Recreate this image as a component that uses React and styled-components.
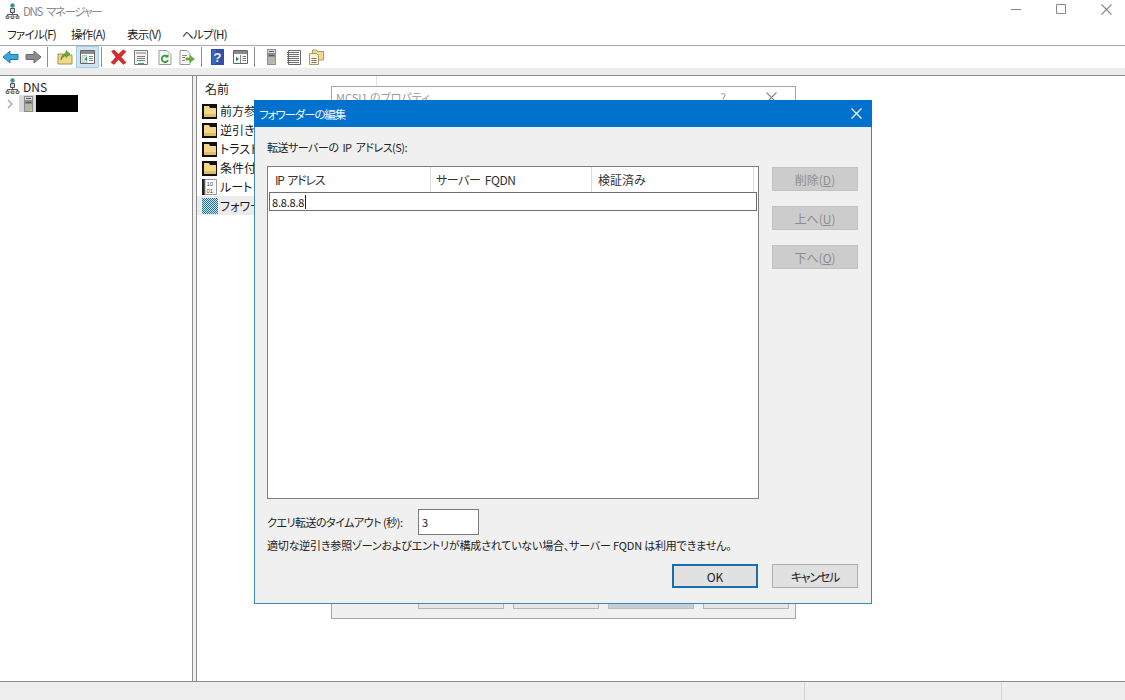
import React from "react";
import styled, { createGlobalStyle } from "styled-components";

const Global = createGlobalStyle`
  html, body { margin: 0; padding: 0; background: #fff; }
  body {
    font-family: "Noto Sans CJK JP", "Noto Sans", sans-serif;
    font-size: 12px;
    color: #1a1a1a;
    font-feature-settings: "palt";
  }
`;

const Win = styled.div`
  position: relative;
  width: 1125px;
  height: 700px;
  display: flex;
  flex-direction: column;
  overflow: hidden;
  background: #fff;
`;

const TitleBar = styled.div`
  height: 22px;
  display: flex;
  align-items: center;
  padding-left: 5px;
  gap: 3px;
  color: #8a8a8a;
  font-size: 11.5px;
  svg { flex: none; }
`;

const TitleText = styled.span`
  flex: 1;
  letter-spacing: -1.4px;
  word-spacing: 3px;
`;

const WinButtons = styled.div`
  display: flex;
  align-items: center;
  gap: 35px;
  padding: 0 13px 4px 0;
  color: #8a8a8a;
`;

const MenuBar = styled.div`
  height: 23px;
  display: flex;
  align-items: center;
  gap: 17px;
  padding-left: 7px;
  border-bottom: 1px solid #a8a8a8;
  font-size: 11.5px;
  letter-spacing: -0.7px;
  color: #222;
`;

const MenuItem = styled.span`
  width: ${p => p.$w}px;
  white-space: nowrap;
`;

const Toolbar = styled.div`
  height: 22px;
  display: flex;
  align-items: center;
  padding-left: 2px;
`;

const Tool = styled.div`
  width: ${p => p.$w}px;
  height: 22px;
  margin-left: ${p => p.$ml || 0}px;
  display: flex;
  align-items: center;
  justify-content: center;
  flex: none;
  ${p => p.$active && "background: #cfe3f3; border: 1px solid #a8cce8; box-sizing: border-box;"}
`;

const Sep = styled.div`
  width: 1px;
  height: 20px;
  margin-left: ${p => p.$ml}px;
  background: #8f8f8f;
  flex: none;
`;

const Band = styled.div`
  height: 7px;
  background: #ececec;
  border-bottom: 1px solid #8c8c8c;
`;

const Panes = styled.div`
  flex: 1;
  display: flex;
  gap: 3px;
  min-height: 0;
  background: #f0f0f0;
`;

const TreePane = styled.div`
  width: 192px;
  background: #fff;
  border-right: 1px solid #8c8c8c;
  padding-top: 1px;
`;

const TreeRow = styled.div`
  height: ${p => p.$h}px;
  display: flex;
  align-items: center;
  padding-left: ${p => p.$indent || 0}px;
  gap: ${p => p.$gap || 0}px;
`;

const Chevron = styled.div`
  width: 19px;
  display: flex;
  padding-left: 7px;
  box-sizing: border-box;
  flex: none;
`;

const TreeSelected = styled.div`
  width: 59px;
  height: 17px;
  background: #d9d9d9;
  display: flex;
  align-items: center;
  padding-left: 5px;
  box-sizing: border-box;
  gap: 3px;
`;

const Redacted = styled.div`
  width: 42px;
  height: 17px;
  background: #000;
  margin-left: auto;
`;

const ListPane = styled.div`
  flex: 1;
  background: #fff;
  border-left: 1px solid #8c8c8c;
`;

const ListHead = styled.div`
  width: 180px;
  height: 25px;
  padding-left: 8px;
  display: flex;
  align-items: center;
  box-sizing: border-box;
  border-right: 1px solid #e2e2e2;
`;

const ListRow = styled.div`
  width: 180px;
  height: 19px;
  display: flex;
  align-items: center;
  gap: 2px;
  padding-left: 5px;
  box-sizing: border-box;
  background: ${p => (p.$selected ? "#ececec" : "transparent")};
  white-space: nowrap;
`;

const StatusBar = styled.div`
  height: 18px;
  background: #eeeeee;
  border-top: 1px solid #8c8c8c;
  display: flex;
  justify-content: flex-end;
`;

const StatusCell = styled.div`
  width: ${p => p.$w}px;
  box-sizing: border-box;
  border-left: 1px solid #d2d2d2;
`;

const BackDialog = styled.div`
  position: absolute;
  left: 331px;
  top: 86px;
  width: 463px;
  height: 531px;
  background: #f0f0f0;
  border: 1px solid #a6a6a6;
`;

const BackTitle = styled.div`
  height: 20px;
  background: #fff;
  display: flex;
  align-items: center;
  padding: 0 18px 0 4px;
  justify-content: space-between;
  color: #9a9a9a;
  font-size: 11px;
`;

const BackControls = styled.div`
  display: flex;
  align-items: center;
  gap: 40px;
`;

const BackButtons = styled.div`
  position: absolute;
  left: 86px;
  bottom: 9px;
  display: flex;
  gap: 9px;
`;

const BackButton = styled.div`
  width: 86px;
  height: 24px;
  background: ${p => (p.$tint ? "#c3ced6" : "#e6e6e6")};
  border: 1px solid ${p => (p.$tint ? "#b5c0c8" : "#b4b4b4")};
  box-sizing: border-box;
`;

const Dialog = styled.div`
  position: absolute;
  left: 254px;
  top: 100px;
  width: 618px;
  height: 504px;
  box-sizing: border-box;
  background: #f0f0f0;
  border: 1px solid #3f88b8;
  border-top: none;
  display: flex;
  flex-direction: column;
`;

const DialogTitle = styled.div`
  height: 27px;
  margin: 0 -1px;
  flex: none;
  background: #0072cd;
  color: #f2f8fd;
  display: flex;
  align-items: center;
  justify-content: space-between;
  padding: 0 10px 0 5px;
  font-size: 11.5px;
  span { letter-spacing: -1.1px; }
`;

const DialogBody = styled.div`
  flex: 1;
  padding: 11px 13px 14px 12px;
  display: flex;
  flex-direction: column;
`;

const FieldLabel = styled.div`
  height: 18px;
  line-height: 18px;
  font-size: 11px;
  letter-spacing: -0.5px;
  word-spacing: 2px;
  color: #222;
`;

const TableRow = styled.div`
  display: flex;
  gap: 13px;
  margin-top: 10px;
`;

const Table = styled.div`
  position: relative;
  width: 492px;
  height: 333px;
  box-sizing: border-box;
  background: #fff;
  border: 1px solid #7f7f7f;
`;

const TableHead = styled.div`
  height: 25px;
  display: flex;
`;

const HeadCell = styled.div`
  width: ${p => p.$w}px;
  padding-left: ${p => p.$pad}px;
  box-sizing: border-box;
  display: flex;
  align-items: center;
  border-right: 1px solid #dcdcdc;
  letter-spacing: ${p => p.$ls || 0}px;
  word-spacing: 2px;
  white-space: pre;
  color: #333;
`;

const EditRow = styled.div`
  margin: 0 0 0 1px;
  width: 488px;
  height: 19px;
  box-sizing: border-box;
  border: 1px solid #6e6e6e;
  display: flex;
  align-items: center;
  padding-left: 2px;
  font-size: 11px;
  letter-spacing: -0.2px;
`;

const Caret = styled.span`
  width: 1px;
  height: 14px;
  background: #222;
  margin-left: 1px;
`;

const SideButtons = styled.div`
  display: flex;
  flex-direction: column;
  gap: 15px;
  padding-top: 1px;
`;

const DisabledButton = styled.div`
  width: 86px;
  height: 24px;
  background: #cccccc;
  border: 1px solid #c2c2c2;
  box-sizing: border-box;
  color: #8c8c8c;
  display: flex;
  align-items: center;
  justify-content: center;
  u { text-underline-offset: 1px; }
`;

const TimeoutRow = styled.div`
  display: flex;
  align-items: center;
  margin-top: 10px;
  height: 26px;
  color: #222;
`;

const TimeoutLabel = styled.span`
  width: 151px;
  white-space: nowrap;
  font-size: 11px;
  letter-spacing: -0.5px;
`;

const TimeoutInput = styled.div`
  width: 61px;
  height: 26px;
  box-sizing: border-box;
  background: #fff;
  border: 1px solid #7a7a7a;
  padding-left: 3px;
  display: flex;
  align-items: center;
  font-size: 11px;
`;

const Note = styled.div`
  margin-top: 1px;
  height: 18px;
  line-height: 18px;
  font-size: 11px;
  letter-spacing: -0.18px;
  color: #222;
  white-space: nowrap;
`;

const Footer = styled.div`
  margin-top: auto;
  margin-bottom: 1px;
  display: flex;
  justify-content: flex-end;
  gap: 14px;
`;

const Button = styled.div`
  width: 86px;
  height: 24px;
  box-sizing: border-box;
  background: #e1e1e1;
  border: ${p => (p.$primary ? "2px solid #1b6ea8" : "1px solid #adadad")};
  display: flex;
  align-items: center;
  justify-content: center;
  letter-spacing: ${p => (p.$primary ? 0 : -1.2)}px;
  color: #222;
`;

const DnsIcon = () => (
  <svg width="15" height="16" viewBox="0 0 15 16">
    <circle cx="7.5" cy="2.5" r="2.2" fill="#3f8f96" />
    <path d="M5.5 5.500h4v4h-4z" fill="#d8d8d8" stroke="#555" />
    <path d="M7.500 9.500v2M2.500 13v-1.500h10V13" fill="none" stroke="#555" />
    <path d="M1 13h3v2.500H1zM6 13h3v2.500H6zM11 13h3v2.500h-3z" fill="#c9c9c9" stroke="#555" strokeWidth=".8" />
  </svg>
);

const ServerIcon = () => (
  <svg width="9" height="16" viewBox="0 0 9 16">
    <path d="M0 0h9v16H0z" fill="#8d8d8d" />
    <path d="M1 1h7v3H1z" fill="#dcdcdc" />
    <path d="M2 2.500h5M2 6.500h5" stroke="#555" />
    <path d="M1 8h7v7H1z" fill="#b5b5b5" />
    <path d="M6 13h2v2H6z" fill="#c8d36a" />
  </svg>
);

const Folder = () => (
  <svg width="16" height="16" viewBox="0 0 16 16">
    <path d="M0 1h15v15H0z" fill="#111" />
    <path d="M2 3h5l1 2h6v9H2z" fill="#f2d68c" />
    <path d="M2 11h12v3H2z" fill="#e2bd66" />
  </svg>
);

const RootHints = () => (
  <svg width="16" height="16" viewBox="0 0 16 16">
    <path d="M0 0h3v16H0z" fill="#222" />
    <path d="M3 .5h11.500v15H3z" fill="#fff" stroke="#999" />
    <text x="4.500" y="7" fontSize="6" fontFamily="Liberation Sans" fill="#444">10</text>
    <text x="4.500" y="13.500" fontSize="6" fontFamily="Liberation Sans" fill="#444">01</text>
  </svg>
);

const Hatched = () => (
  <svg width="16" height="16" viewBox="0 0 16 16">
    <defs>
      <pattern id="dots" width="2" height="2" patternUnits="userSpaceOnUse">
        <path d="M0 0h2v2H0z" fill="#cfe6ee" />
        <path d="M0 0h1v1H0zM1 1h1v1H1z" fill="#1f6f93" />
      </pattern>
    </defs>
    <path d="M0 0h16v16H0z" fill="url(#dots)" />
  </svg>
);

const ArrowLeft = ({ fill, stroke }) => (
  <svg width="17" height="14" viewBox="0 0 17 14">
    <path d="M1 7l7-6v3.500h8v5H8V13z" fill={fill} stroke={stroke} />
  </svg>
);

const ArrowRight = ({ fill, stroke }) => (
  <svg width="17" height="14" viewBox="0 0 17 14">
    <path d="M16 7L9 1v3.500H1v5h8V13z" fill={fill} stroke={stroke} />
  </svg>
);

const FolderUp = () => (
  <svg width="16" height="16" viewBox="0 0 16 16">
    <path d="M1 5h5l1 1h8v9H1z" fill="#f0d98f" stroke="#a88d45" />
    <path d="M4 11c0-4 2-6 5-7V1.500L13 5l-4 3.500V6.500C7 7 5.500 8.500 4 11z" fill="#6fae2e" stroke="#4c7f1c" strokeWidth=".6" />
  </svg>
);

const PaneIcon = () => (
  <svg width="15" height="14" viewBox="0 0 15 14">
    <path d="M.5.5h14v13H.5z" fill="#fff" stroke="#666" />
    <path d="M1 1h13v3H1z" fill="#8a8a8a" />
    <path d="M2 5.500h5v7H2z" fill="#d8e6e6" stroke="#8aa" strokeWidth=".5" />
    <path d="M7 7l-2.500 2L7 11z" fill="#2f8a5a" />
    <path d="M9 6.500h4M9 8.500h4M9 10.500h4" stroke="#888" />
  </svg>
);

const DeleteIcon = () => (
  <svg width="17" height="16" viewBox="0 0 17 16">
    <path d="M1.500 2.500L4 .8l4.500 4.400L13 .8l3 1.700L11 8l5 5.500-2.500 2-5-5-4.500 5-3-2L6 8z" fill="#d92b2b" stroke="#a81c1c" strokeWidth=".5" />
  </svg>
);

const PropsIcon = () => (
  <svg width="14" height="15" viewBox="0 0 14 15">
    <path d="M.5.5h13v14H.5z" fill="#f4f4f4" stroke="#777" />
    <path d="M2 2h10v2H2z" fill="#b8b8b8" />
    <path d="M3 6.500h8M3 8.500h8M3 10.500h8" stroke="#7f7f7f" />
    <path d="M4 13.500h6" stroke="#3f9aa8" />
  </svg>
);

const RefreshIcon = () => (
  <svg width="14" height="15" viewBox="0 0 14 15">
    <path d="M1 .5h8l4 4v10H1z" fill="#f7f7f7" stroke="#999" />
    <path d="M10 10a3.200 3.200 0 1 1-.8-3.400" fill="none" stroke="#2e9b35" strokeWidth="1.800" />
    <path d="M10.500 4v3.500H7z" fill="#2e9b35" />
  </svg>
);

const ExportIcon = () => (
  <svg width="16" height="15" viewBox="0 0 16 15">
    <path d="M1 .5h7l3 3v11H1z" fill="#fafafa" stroke="#999" />
    <path d="M3 5.500h5M3 7.500h3M3 10.500h3" stroke="#888" />
    <path d="M7 8h4V5.500L15.500 9 11 12.500V10H7z" fill="#69b53a" stroke="#4a8a25" strokeWidth=".5" />
  </svg>
);

const HelpIcon = () => (
  <svg width="13" height="16" viewBox="0 0 13 16">
    <path d="M0 0h13v16H0z" fill="#2f4fa8" />
    <path d="M1 1h4v14H1z" fill="#3d63c4" />
    <text x="6.500" y="13" textAnchor="middle" fontSize="13" fontWeight="700" fontFamily="Liberation Sans" fill="#f2f2f2">?</text>
  </svg>
);

const ActionPaneIcon = () => (
  <svg width="15" height="14" viewBox="0 0 15 14">
    <path d="M.5.5h14v13H.5z" fill="#fff" stroke="#666" />
    <path d="M1 1h13v3H1z" fill="#8a8a8a" />
    <path d="M3 6.500l3 2.500-3 2.500z" fill="#2f8a5a" />
    <path d="M7.500 5v8" stroke="#888" />
    <path d="M9.500 6.500h3.500M9.500 8.500h3.500M9.500 10.500h3.500" stroke="#777" />
  </svg>
);

const ListIcon = () => (
  <svg width="14" height="15" viewBox="0 0 14 15">
    <path d="M1.500.5h12v14h-12z" fill="#f6f6f6" stroke="#666" />
    <path d="M0 2.500h12M0 4.500h12M0 6.500h12M0 8.500h12M0 10.500h12M0 12.500h12" stroke="#6f6f6f" />
  </svg>
);

const FolderDoc = () => (
  <svg width="15" height="16" viewBox="0 0 15 16">
    <path d="M3.500 1h4l1 1.500h6V11h-11z" fill="#f1d98f" stroke="#b59a55" />
    <path d="M.5 4.500h7l2 2V15.500h-9z" fill="#fbf3d8" stroke="#a89a70" />
    <path d="M2.500 9.500h5M2.500 11.500h5M2.500 13.500h5" stroke="#777" />
  </svg>
);

const CloseGlyph = ({ size = 11, color = "#fff" }) => (
  <svg width={size} height={size} viewBox="0 0 11 11">
    <path d="M.5.500l10 10M10.500.500l-10 10" stroke={color} strokeWidth="1.100" fill="none" />
  </svg>
);

const rows = [
  [<Folder key="a" />, "前方参照ゾーン"],
  [<Folder key="b" />, "逆引き参照ゾーン"],
  [<Folder key="c" />, "トラストポイント"],
  [<Folder key="d" />, "条件付きフォワーダー"],
  [<RootHints key="e" />, "ルートヒント"],
  [<Hatched key="f" />, "フォワーダー"],
];

export default function App() {
  return (
    <Win>
      <Global />
      <TitleBar>
        <DnsIcon />
        <TitleText>DNS マネージャー</TitleText>
        <WinButtons>
          <svg width="10" height="1"><path d="M0 .5h10" stroke="#8a8a8a" /></svg>
          <svg width="10" height="10"><path d="M.5.500h9v9h-9z" fill="none" stroke="#8a8a8a" /></svg>
          <CloseGlyph color="#8a8a8a" />
        </WinButtons>
      </TitleBar>
      <MenuBar>
        <MenuItem $w={47}>ファイル(F)</MenuItem>
        <MenuItem $w={39}>操作(A)</MenuItem>
        <MenuItem $w={38}>表示(V)</MenuItem>
        <MenuItem $w={45}>ヘルプ(H)</MenuItem>
      </MenuBar>
      <Toolbar>
        <Tool $w={17}><ArrowLeft fill="#3fa6dc" stroke="#1f79b0" /></Tool>
        <Tool $w={17} $ml={6}><ArrowRight fill="#8c8c8c" stroke="#6a6a6a" /></Tool>
        <Sep $ml={5} />
        <Tool $w={16} $ml={9}><FolderUp /></Tool>
        <Tool $w={23} $ml={3} $active><PaneIcon /></Tool>
        <Sep $ml={2} />
        <Tool $w={17} $ml={8}><DeleteIcon /></Tool>
        <Tool $w={14} $ml={7}><PropsIcon /></Tool>
        <Tool $w={14} $ml={10}><RefreshIcon /></Tool>
        <Tool $w={16} $ml={7}><ExportIcon /></Tool>
        <Sep $ml={6} />
        <Tool $w={13} $ml={9}><HelpIcon /></Tool>
        <Tool $w={15} $ml={9}><ActionPaneIcon /></Tool>
        <Sep $ml={6} />
        <Tool $w={9} $ml={12}><ServerIcon /></Tool>
        <Tool $w={14} $ml={11}><ListIcon /></Tool>
        <Tool $w={15} $ml={8}><FolderDoc /></Tool>
      </Toolbar>
      <Band />
      <Panes>
        <TreePane>
          <TreeRow $h={18} $indent={5} $gap={3}>
            <DnsIcon />
            <span>DNS</span>
          </TreeRow>
          <TreeRow $h={17}>
            <Chevron>
              <svg width="6" height="10" viewBox="0 0 6 10"><path d="M1 1l4 4-4 4" fill="none" stroke="#a0a0a0" strokeWidth="1.200" /></svg>
            </Chevron>
            <TreeSelected>
              <ServerIcon />
              <Redacted />
            </TreeSelected>
          </TreeRow>
        </TreePane>
        <ListPane>
          <ListHead>名前</ListHead>
          {rows.map(([icon, label], i) => (
            <ListRow key={label} $selected={i === 5}>
              {icon}
              <span>{label}</span>
            </ListRow>
          ))}
        </ListPane>
      </Panes>
      <StatusBar>
        <StatusCell $w={197} />
        <StatusCell $w={124} />
      </StatusBar>

      <BackDialog>
        <BackTitle>
          <span>MCSI1 のプロパティ</span>
          <BackControls>
            <span>?</span>
            <CloseGlyph color="#8a8a8a" />
          </BackControls>
        </BackTitle>
        <BackButtons>
          <BackButton />
          <BackButton />
          <BackButton $tint />
          <BackButton />
        </BackButtons>
      </BackDialog>

      <Dialog>
        <DialogTitle>
          <span>フォワーダーの編集</span>
          <CloseGlyph />
        </DialogTitle>
        <DialogBody>
          <FieldLabel>転送サーバーの IP アドレス(S):</FieldLabel>
          <TableRow>
            <Table>
              <TableHead>
                <HeadCell $w={163} $pad={7} $ls={-1.2}>IP アドレス</HeadCell>
                <HeadCell $w={161} $pad={5} $ls={-0.4}>サーバー FQDN</HeadCell>
                <HeadCell $w={162} $pad={6}>検証済み</HeadCell>
              </TableHead>
              <EditRow>8.8.8.8<Caret /></EditRow>
            </Table>
            <SideButtons>
              <DisabledButton>削除(<u>D</u>)</DisabledButton>
              <DisabledButton>上へ(<u>U</u>)</DisabledButton>
              <DisabledButton>下へ(<u>O</u>)</DisabledButton>
            </SideButtons>
          </TableRow>
          <TimeoutRow>
            <TimeoutLabel>クエリ転送のタイムアウト (秒):</TimeoutLabel>
            <TimeoutInput>3</TimeoutInput>
          </TimeoutRow>
          <Note>適切な逆引き参照ゾーンおよびエントリが構成されていない場合、サーバー FQDN は利用できません。</Note>
          <Footer>
            <Button $primary>OK</Button>
            <Button>キャンセル</Button>
          </Footer>
        </DialogBody>
      </Dialog>
    </Win>
  );
}
